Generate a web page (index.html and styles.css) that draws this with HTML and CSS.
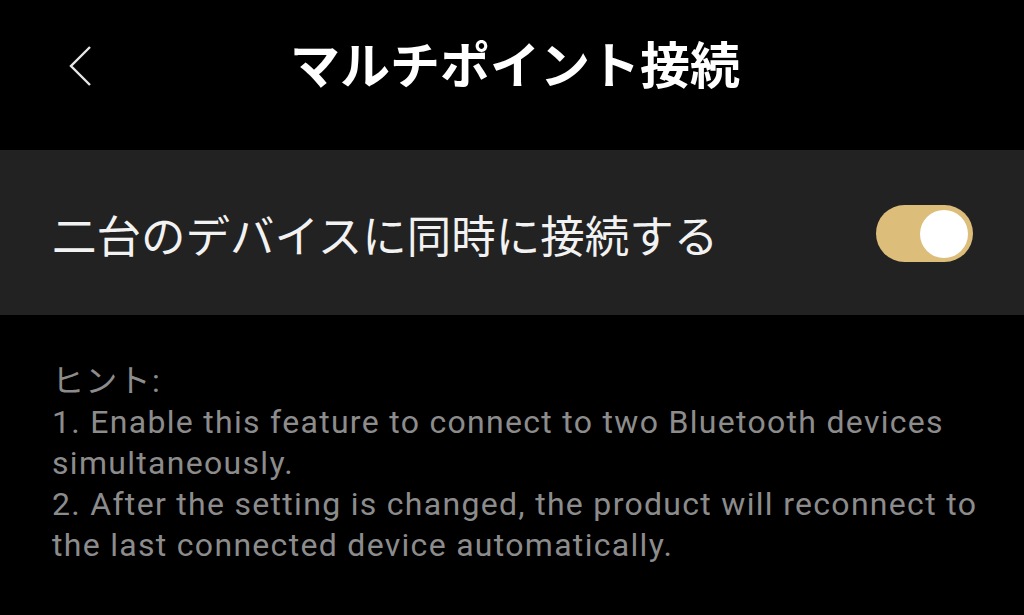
FILE: index.html
```html
<!DOCTYPE html>
<html lang="ja">
<head>
<meta charset="utf-8">
<link rel="stylesheet" href="styles.css">
</head>
<body>
<div class="screen">
  <header class="topbar">
    <div class="back">
      <svg width="28" height="42" viewBox="0 0 28 42"><path d="M24 2 L5 21 L24 40" fill="none" stroke="#e6e6e6" stroke-width="2.4" stroke-linejoin="miter"/></svg>
    </div>
    <h1 class="title">マルチポイント接続</h1>
  </header>
  <section class="row">
    <span class="label">二台のデバイスに同時に接続する</span>
    <div class="toggle"><div class="knob"></div></div>
  </section>
  <section class="hint">
    <p>ヒント:</p>
    <p>1. Enable this feature to connect to two Bluetooth devices simultaneously.</p>
    <p>2. After the setting is changed, the product will reconnect to the last connected device automatically.</p>
  </section>
</div>
</body>
</html>
```
FILE: styles.css
```css
html, body {
  margin: 0;
  padding: 0;
  background: #000;
}
.screen {
  width: 1024px;
  height: 615px;
  overflow: hidden;
  background: #000;
}
.topbar {
  position: relative;
  height: 150px;
  display: flex;
  align-items: center;
  justify-content: center;
}
.back {
  position: absolute;
  left: 66px;
  top: 45px;
  width: 28px;
  height: 42px;
}
.back svg { display: block; }
.title {
  margin: 0 0 26px 6px;
  font-family: "Noto Sans CJK JP", sans-serif;
  font-weight: 700;
  font-size: 50px;
  color: #fff;
  letter-spacing: 0;
}
.row {
  height: 165px;
  background: #222222;
  display: flex;
  align-items: center;
  justify-content: space-between;
  padding: 0 52px 0 52px;
}
.label {
  font-family: "Noto Sans CJK JP", sans-serif;
  font-weight: 400;
  font-size: 44.5px;
  color: #f2f2f2;
  margin-top: 2px;
}
.toggle {
  width: 97px;
  height: 57px;
  border-radius: 29px;
  background: #dcbd79;
  display: flex;
  align-items: center;
  justify-content: flex-end;
  padding-right: 5px;
  box-sizing: border-box;
  margin-right: -1px;
  margin-top: 2px;
}
.knob {
  width: 48px;
  height: 48px;
  border-radius: 50%;
  background: #fff;
}
.hint {
  padding: 46px 24px 0 52px;
  font-family: Roboto, "Noto Sans CJK JP", sans-serif;
  font-size: 32px;
  line-height: 41px;
  letter-spacing: 1.3px;
  color: #8c8c8c;
}
.hint p {
  margin: 0;
}
```
